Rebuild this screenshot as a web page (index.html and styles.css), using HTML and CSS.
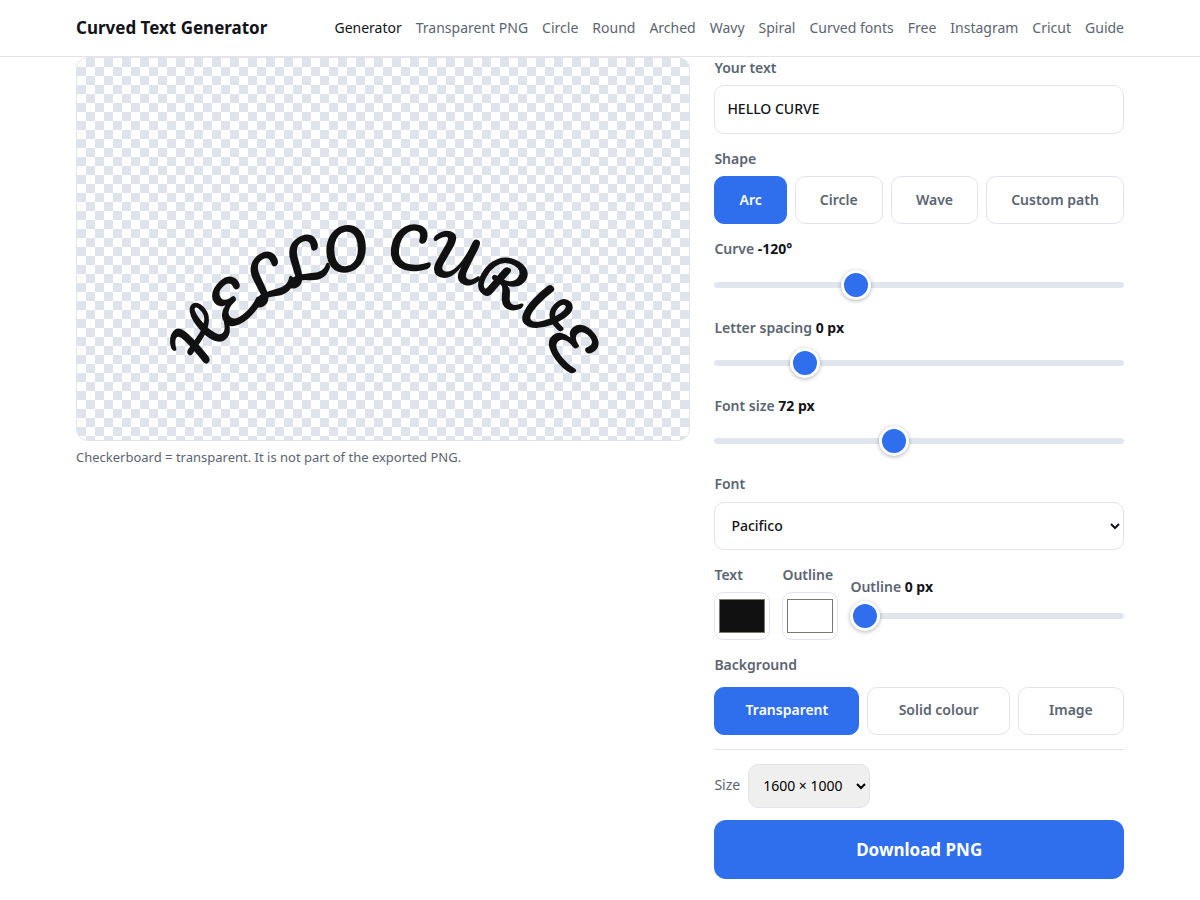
FILE: index.html
```html
<!DOCTYPE html>
<html lang="en">
<head>
    <meta charset="UTF-8">
    <meta name="viewport" content="width=device-width, initial-scale=1.0">
    <title>Curved Text Generator</title>
    <link rel="stylesheet" href="styles.css">
</head>
<body>
    <header class="header">
        <div class="header-inner">
            <a class="brand" href="#">Curved Text Generator</a>
            <nav class="nav">
                <a class="active" href="#generator">Generator</a>
                <a href="#transparent">Transparent PNG</a>
                <a href="#circle">Circle</a>
                <a href="#round">Round</a>
                <a href="#arched">Arched</a>
                <a href="#wavy">Wavy</a>
                <a href="#spiral">Spiral</a>
                <a href="#fonts">Curved fonts</a>
                <a href="#free">Free</a>
                <a href="#instagram">Instagram</a>
                <a href="#cricut">Cricut</a>
                <a href="#guide">Guide</a>
            </nav>
        </div>
    </header>

    <main class="tool">
        <section class="stage">
            <div class="preview">
                <svg viewBox="0 0 612 382" role="img" aria-label="HELLO CURVE">
                    <defs>
                        <path id="arc" d="M 96 421 A 210 210 0 0 1 516 421"/>
                    </defs>
                    <text class="curved-text"><textPath href="#arc" startOffset="50%">HELLO CURVE</textPath></text>
                </svg>
            </div>
            <p class="hint">Checkerboard = transparent. It is not part of the exported PNG.</p>
        </section>

        <form class="panel">
            <div class="field">
                <label for="text">Your text</label>
                <input type="text" id="text" class="text-input" value="HELLO CURVE">
            </div>

            <div class="field" role="group" aria-labelledby="shapeLabel">
                <span class="label" id="shapeLabel">Shape</span>
                <div class="segments">
                    <button type="button" class="segment active">Arc</button>
                    <button type="button" class="segment">Circle</button>
                    <button type="button" class="segment">Wave</button>
                    <button type="button" class="segment">Custom path</button>
                </div>
            </div>

            <div class="field">
                <label for="curve">Curve <b>-120°</b></label>
                <input type="range" id="curve" min="-360" max="360" value="-120">
            </div>

            <div class="field">
                <label for="spacing">Letter spacing <b>0 px</b></label>
                <input type="range" id="spacing" min="-10" max="40" value="0">
            </div>

            <div class="field">
                <label for="size">Font size <b>72 px</b></label>
                <input type="range" id="size" min="20" max="140" value="72">
            </div>

            <div class="field">
                <label for="font">Font</label>
                <select id="font" class="font-select">
                    <option>Pacifico</option>
                </select>
            </div>

            <div class="colors">
                <div class="field">
                    <label for="textColor">Text</label>
                    <input type="color" id="textColor" value="#111111">
                </div>
                <div class="field">
                    <label for="outlineColor">Outline</label>
                    <input type="color" id="outlineColor" value="#ffffff">
                </div>
                <div class="outline-width">
                    <label for="outline">Outline <b>0 px</b></label>
                    <input type="range" id="outline" min="0" max="20" value="0">
                </div>
            </div>

            <div class="field background" role="group" aria-labelledby="bgLabel">
                <span class="label" id="bgLabel">Background</span>
                <div class="segments">
                    <button type="button" class="segment active">Transparent</button>
                    <button type="button" class="segment">Solid colour</button>
                    <button type="button" class="segment">Image</button>
                </div>
            </div>

            <div class="export">
                <div class="export-size">
                    <label for="exportSize">Size</label>
                    <select id="exportSize">
                        <option>1600 × 1000</option>
                    </select>
                </div>
                <button type="button" class="download">Download PNG</button>
            </div>
        </form>
    </main>
</body>
</html>
```

FILE: styles.css
```css
* {
    box-sizing: border-box;
}

body {
    margin: 0;
    font-family: "Noto Sans", sans-serif;
    font-size: 14px;
    line-height: 1.6;
    background-color: #fff;
    color: #111318;
}

button, input, select {
    font: inherit;
}

.header {
    position: sticky;
    top: 0;
    z-index: 10;
    background-color: #fff;
    border-bottom: 1px solid #e2e4e9;
}

.header-inner {
    display: flex;
    align-items: center;
    justify-content: space-between;
    max-width: 1096px;
    min-height: 56px;
    margin: 0 auto;
    padding: 0 24px;
}

.brand {
    font-size: 17px;
    font-weight: 700;
    color: #111318;
    text-decoration: none;
}

.nav {
    display: flex;
    gap: 14px;
}

.nav a {
    color: #5b6472;
    text-decoration: none;
}

.nav a.active {
    color: #111318;
}

.tool {
    display: grid;
    grid-template-columns: 3fr 2fr;
    gap: 24px;
    align-items: start;
    max-width: 1096px;
    margin: 0 auto;
    padding: 0 24px 20px;
}

/* Preview */
.preview {
    border: 1px solid #e2e4e9;
    border-radius: 12px;
    overflow: hidden;
    background: repeating-conic-gradient(#dfe3eb 0 25%, #fff 0 50%) 0 0 / 18px 18px;
}

.preview svg {
    display: block;
    width: 100%;
}

.curved-text {
    font-family: Pacifico, cursive;
    font-size: 55px;
    text-anchor: middle;
    fill: #111;
}

.hint {
    margin: 6px 0 0;
    font-size: 13px;
    color: #5b6472;
}

/* Controls */
.panel {
    display: flex;
    flex-direction: column;
    gap: 14px;
    min-width: 0;
}

.field {
    display: flex;
    flex-direction: column;
    gap: 6px;
}

label, .label {
    font-weight: 600;
    color: #5b6472;
}

label b {
    font-weight: 700;
    color: #111318;
}

.text-input {
    width: 100%;
    padding: 12px;
    border: 1px solid #e2e4e9;
    border-radius: 10px;
    background-color: #fff;
    color: #111318;
    font-weight: 500;
}

.segments {
    display: flex;
    gap: 8px;
}

.segment {
    flex: 1 1 auto;
    height: 48px;
    padding: 0 14px;
    border: 1px solid #e2e4e9;
    border-radius: 10px;
    background-color: #fff;
    color: #5b6472;
    font-weight: 600;
    cursor: pointer;
}

.segment.active {
    background-color: #2f6fed;
    border-color: #2f6fed;
    color: #fff;
}

input[type="range"] {
    appearance: none;
    display: block;
    width: 100%;
    height: 36px;
    margin: 0;
    background: transparent;
}

input[type="range"]::-webkit-slider-runnable-track {
    height: 6px;
    border-radius: 3px;
    background-color: #e1e5ee;
}

input[type="range"]::-webkit-slider-thumb {
    appearance: none;
    width: 30px;
    height: 30px;
    margin-top: -12px;
    border: 3px solid #fff;
    border-radius: 50%;
    background-color: #2f6fed;
    box-shadow: 0 1px 4px rgba(0, 0, 0, 0.3);
}

.font-select {
    width: 100%;
    height: 48px;
    padding: 0 0 0 12px;
    border: 1px solid #e2e4e9;
    border-radius: 10px;
    background-color: #fff;
    color: #111318;
    font-weight: 500;
}

.colors {
    display: flex;
    gap: 12px;
}

.colors .field {
    width: 56px;
}

.colors input[type="color"] {
    width: 56px;
    height: 48px;
    padding: 2px;
    border: 1px solid #e2e4e9;
    border-radius: 10px;
    background-color: #fff;
}

.outline-width {
    flex: 1;
    align-self: flex-end;
    padding-bottom: 6px;
}

.background {
    gap: 10px;
}

.export {
    display: flex;
    flex-direction: column;
    gap: 12px;
    padding-top: 14px;
    border-top: 1px solid #e2e4e9;
}

.export-size {
    display: flex;
    align-items: center;
    gap: 8px;
}

.export-size label {
    font-weight: 400;
}

.export-size select {
    width: 122px;
    height: 44px;
    padding: 0 0 0 10px;
    border: 1px solid #e2e4e9;
    border-radius: 10px;
    background-color: #efefef;
    color: #000;
}

.download {
    padding: 16px;
    border: none;
    border-radius: 12px;
    background-color: #2f6fed;
    color: #fff;
    font-size: 17px;
    font-weight: 700;
    cursor: pointer;
}
```
